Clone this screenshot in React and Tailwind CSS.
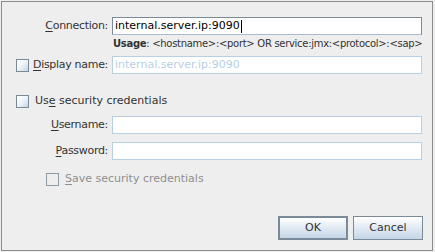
import React from 'react';

const font = { fontFamily: '"DejaVu Sans", sans-serif' };

const Mn = ({ children }) => <span className="underline underline-offset-2">{children}</span>;

const CheckBox = ({ disabled }) => (
  <span
    className={`inline-block shrink-0 w-[13px] h-[13px] border ${
      disabled
        ? 'border-[#8e9aa6] bg-[#eeeeee]'
        : 'border-[#7a8a99] bg-gradient-to-br from-white via-[#eef3f8] to-[#c4d5e6]'
    }`}
  />
);

const Field = ({ value, disabled, focused }) => (
  <div
    className={`w-[310px] h-[18px] bg-white border flex items-center px-[2px] text-[11px] ${
      focused ? 'border-[#7a8a99] border-b-[#a9bccf]' : 'border-[#b8cfe5]'
    } ${disabled ? 'text-[#b8cfe5]' : 'text-black'}`}
  >
    {value}
    {focused && <span className="inline-block w-px h-[13px] bg-black ml-px" />}
  </div>
);

const Row = ({ label, children, check }) => (
  <div className="flex items-center h-[18px]">
    <div className="w-[110px] shrink-0 pr-[4px] pl-[14px] flex items-center text-[11px] text-[#333333]">
      {check && <CheckBox />}
      <span className="ml-auto whitespace-nowrap tracking-[-0.3px]">{label}</span>
    </div>
    {children}
  </div>
);

const Button = ({ children, primary }) => (
  <button
    className={`w-[70px] h-[24px] flex items-center justify-center text-[11px] text-[#333333] bg-gradient-to-b from-white to-[#c4d5e6] ${
      primary ? 'border-2 border-[#7a8a99]' : 'border border-[#7a8a99]'
    }`}
  >
    {children}
  </button>
);

export default function App() {
  return (
    <div className="w-[435px] h-[252px] bg-[#eeeeee] p-px" style={font}>
      <div className="w-[432px] h-[250px] border border-[#8c8c8c] bg-[#eeeeee] flex flex-col pt-[15px]">
        <Row label={<><Mn>C</Mn>onnection:</>}>
          <Field value="internal.server.ip:9090" focused />
        </Row>
        <div className="ml-[111px] mt-[1px] h-[14px] text-[10px] tracking-[-0.3px] text-[#333333] flex items-center whitespace-nowrap">
          <span className="font-bold">Usage</span>: &lt;hostname&gt;:&lt;port&gt; OR service:jmx:&lt;protocol&gt;:&lt;sap&gt;
        </div>
        <div className="mt-[6px]">
          <Row check label={<><Mn>D</Mn>isplay name:</>}>
            <Field value="internal.server.ip:9090" disabled />
          </Row>
        </div>
        <div className="mt-[18px] h-[18px] flex items-center pl-[14px] gap-[6px] text-[11px] text-[#333333]">
          <CheckBox />
          <span>Us<Mn>e</Mn> security credentials</span>
        </div>
        <div className="mt-[6px]">
          <Row label={<><Mn>U</Mn>sername:</>}>
            <Field value="" />
          </Row>
        </div>
        <div className="mt-[8px]">
          <Row label={<><Mn>P</Mn>assword:</>}>
            <Field value="" />
          </Row>
        </div>
        <div className="mt-[10px] h-[18px] flex items-center pl-[44px] gap-[6px] text-[11px] text-[#8e8f8f]">
          <CheckBox disabled />
          <span><Mn>S</Mn>ave security credentials</span>
        </div>
        <div className="mt-[28px] flex justify-end gap-[5px] pr-[9px]">
          <Button primary>OK</Button>
          <Button>Cancel</Button>
        </div>
      </div>
    </div>
  );
}
